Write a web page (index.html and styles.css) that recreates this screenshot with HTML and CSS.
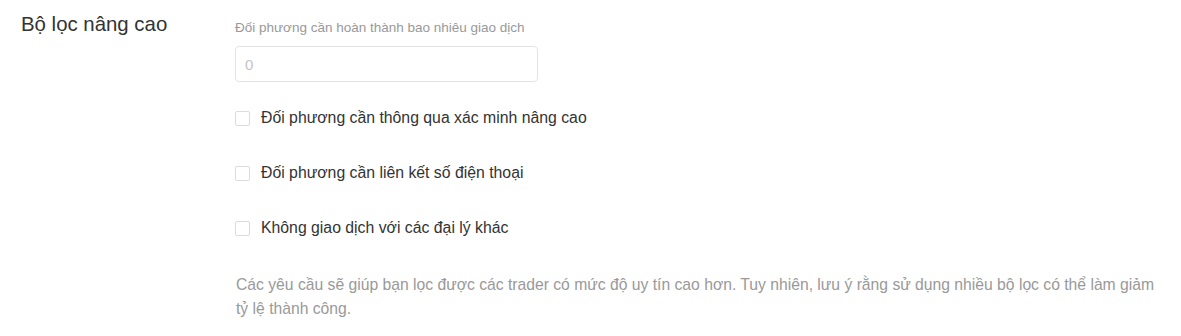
FILE: index.html
```html
<!DOCTYPE html>
<html lang="vi">
<head>
<meta charset="utf-8">
<link rel="stylesheet" href="styles.css">
</head>
<body>
<div class="filter">
  <div class="filter-title">Bộ lọc nâng cao</div>
  <div class="filter-body">
    <label class="field-label">Đối phương cần hoàn thành bao nhiêu giao dịch</label>
    <input class="field-input" type="text" placeholder="0">
    <div class="checks">
      <label class="check-row"><span class="check-box"></span><span class="check-text">Đối phương cần thông qua xác minh nâng cao</span></label>
      <label class="check-row"><span class="check-box"></span><span class="check-text">Đối phương cần liên kết số điện thoại</span></label>
      <label class="check-row"><span class="check-box"></span><span class="check-text">Không giao dịch với các đại lý khác</span></label>
    </div>
    <p class="note">Các yêu cầu sẽ giúp bạn lọc được các trader có mức độ uy tín cao hơn. Tuy nhiên, lưu ý rằng sử dụng nhiều bộ lọc có thể làm giảm tỷ lệ thành công.</p>
  </div>
</div>
</body>
</html>
```

FILE: styles.css
```css
html, body {
  margin: 0;
  padding: 0;
  background: #fff;
}
body {
  font-family: "Liberation Sans", Arial, sans-serif;
  color: #333;
}
.filter {
  display: flex;
  align-items: flex-start;
  padding: 12px 0 0 21px;
}
.filter-title {
  width: 214px;
  flex: none;
  font-size: 20.4px;
  line-height: 24px;
  color: #333;
}
.filter-body {
  flex: none;
  width: 932px;
  padding-top: 7px;
  display: flex;
  flex-direction: column;
  align-items: flex-start;
}
.field-label {
  font-size: 13.5px;
  line-height: 18px;
  color: #999;
}
.field-input {
  margin-top: 9px;
  box-sizing: border-box;
  width: 303px;
  height: 36px;
  border: 1px solid #e3e3e3;
  border-radius: 4px;
  padding: 0 9px;
  font-family: inherit;
  font-size: 15px;
  color: #333;
  outline: none;
}
.field-input::placeholder {
  color: #c4c4c4;
}
.checks {
  margin-top: 26px;
  display: flex;
  flex-direction: column;
  gap: 35px;
}
.check-row {
  display: flex;
  align-items: center;
  height: 20px;
  gap: 11px;
}
.check-box {
  box-sizing: border-box;
  width: 15px;
  height: 15px;
  border: 1px solid #dcdcdc;
  border-radius: 2px;
  background: #fff;
}
.check-text {
  font-size: 15.8px;
  color: #333;
}
.note {
  margin: 35px 0 0 1px;
  font-size: 15.7px;
  line-height: 24px;
  color: #999;
}
```
